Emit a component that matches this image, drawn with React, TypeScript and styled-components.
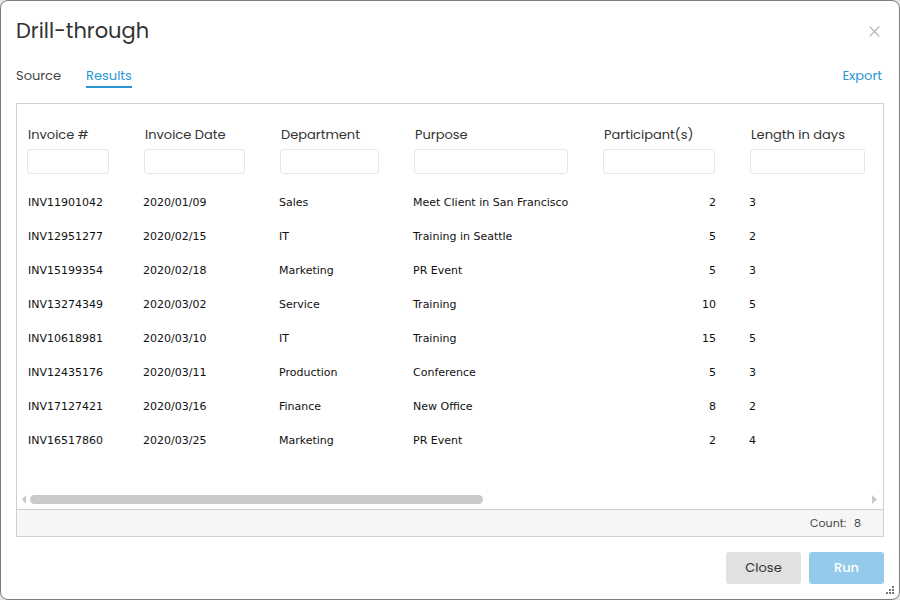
import React from "react";
import styled, { createGlobalStyle } from "styled-components";

const GlobalStyle = createGlobalStyle`
  *, *::before, *::after { box-sizing: border-box; }
  body {
    margin: 0;
    background: #e4e4e4;
    color: #333;
    font-family: Poppins, Inter, sans-serif;
    font-size: 13px;
  }
  button, input { font-family: inherit; font-size: inherit; }
`;

const Dialog = styled.section`
  position: relative;
  display: flex;
  flex-direction: column;
  min-height: 100vh;
  padding: 14px 15px 15px;
  border: 1px solid #7c7c7c;
  border-radius: 8px;
  background: #fff;
`;

const TitleBar = styled.header`
  display: flex;
  align-items: center;
  justify-content: space-between;
  height: 32px;
`;

const Title = styled.h1`
  margin: 0;
  font-size: 21px;
  line-height: 32px;
  font-weight: 400;
`;

const CloseIcon = styled.button`
  display: flex;
  padding: 4px;
  border: 0;
  background: none;
  color: #aaa;
  cursor: pointer;
`;

const TabBar = styled.nav`
  display: flex;
  justify-content: space-between;
  align-items: flex-start;
  height: 40px;
  margin: 16px 2px 0 0;
`;

const TabList = styled.div`
  display: flex;
  gap: 25px;
`;

const Tab = styled.button<{ $active?: boolean }>`
  height: 25px;
  padding: 2px 0 0;
  border: 0;
  border-bottom: 2px solid ${(p) => (p.$active ? "#2a97d3" : "transparent")};
  background: none;
  color: ${(p) => (p.$active ? "#2a97d3" : "#444")};
  line-height: 20px;
  cursor: pointer;
`;

const ExportLink = styled.a`
  color: #2a97d3;
  line-height: 25px;
  text-decoration: none;
`;

const Panel = styled.div`
  display: flex;
  flex: 1;
  flex-direction: column;
  border: 1px solid #d0d0d0;
`;

const TableArea = styled.div`
  flex: 1;
  padding-top: 20px;
`;

const Table = styled.table`
  width: 100%;
  table-layout: fixed;
  border-collapse: collapse;
`;

const Column = styled.col<{ $width: number }>`
  width: ${(p) => p.$width}px;
`;

const HeadCell = styled.th`
  padding: 0 25px 10px 10px;
  font-weight: 400;
  text-align: left;
  white-space: nowrap;

  &:last-child { padding-right: 18px; }
`;

const HeadLabel = styled.label`
  display: block;
  padding-left: 1px;
  line-height: 22px;
`;

const FilterInput = styled.input`
  display: block;
  width: 100%;
  height: 25px;
  margin-top: 3px;
  padding: 0 6px;
  border: 1px solid #e6e6e6;
  border-radius: 3px;
  background: #fff;
`;

const Cell = styled.td<{ $numeric?: boolean }>`
  height: 34px;
  padding: 2px 24px 0 9px;
  color: #111;
  font-family: Verdana, "DejaVu Sans", sans-serif;
  font-size: 11px;
  text-align: ${(p) => (p.$numeric ? "right" : "left")};
  white-space: nowrap;

  &:first-child { padding-left: 11px; }
`;

const ScrollRow = styled.div`
  display: flex;
  align-items: center;
  gap: 4px;
  height: 19px;
  padding: 0 6px 0 5px;
`;

const Arrow = styled.svg`
  flex: none;
  fill: #c9c9c9;
`;

const Track = styled.div`
  flex: 1;
  height: 9px;
`;

const Thumb = styled.div`
  width: 54%;
  height: 100%;
  border-radius: 5px;
  background: #cacaca;
`;

const Summary = styled.div`
  display: flex;
  justify-content: flex-end;
  gap: 8px;
  padding: 0 22px 0 0;
  border-top: 1px solid #d0d0d0;
  background: #f6f6f6;
  color: #444;
  font-size: 11px;
  line-height: 26px;
`;

const Actions = styled.footer`
  display: flex;
  justify-content: flex-end;
  gap: 8px;
  margin-top: 15px;
`;

const ActionButton = styled.button<{ $primary?: boolean }>`
  width: 75px;
  height: 32px;
  padding: 0;
  border: 0;
  border-radius: 3px;
  background: ${(p) => (p.$primary ? "#94caea" : "#e1e1e1")};
  color: ${(p) => (p.$primary ? "#fff" : "#333")};
  font-weight: ${(p) => (p.$primary ? 500 : 400)};
`;

const ResizeGrip = styled.svg`
  position: absolute;
  right: 5px;
  bottom: 5px;
  fill: #777;
`;

const columns = [
  { id: "invoice", label: "Invoice #", width: 117 },
  { id: "date", label: "Invoice Date", width: 136 },
  { id: "department", label: "Department", width: 134 },
  { id: "purpose", label: "Purpose", width: 189 },
  { id: "participants", label: "Participant(s)", width: 147, numeric: true },
  { id: "length", label: "Length in days", width: 143 },
];

const rows = [
  ["INV11901042", "2020/01/09", "Sales", "Meet Client in San Francisco", "2", "3"],
  ["INV12951277", "2020/02/15", "IT", "Training in Seattle", "5", "2"],
  ["INV15199354", "2020/02/18", "Marketing", "PR Event", "5", "3"],
  ["INV13274349", "2020/03/02", "Service", "Training", "10", "5"],
  ["INV10618981", "2020/03/10", "IT", "Training", "15", "5"],
  ["INV12435176", "2020/03/11", "Production", "Conference", "5", "3"],
  ["INV17127421", "2020/03/16", "Finance", "New Office", "8", "2"],
  ["INV16517860", "2020/03/25", "Marketing", "PR Event", "2", "4"],
];

const gripDots = [[6, 0], [3, 3], [6, 3], [0, 6], [3, 6], [6, 6]];

export default function App() {
  return (
    <>
      <GlobalStyle />
      <Dialog role="dialog" aria-labelledby="dialog-title">
        <TitleBar>
          <Title id="dialog-title">Drill-through</Title>
          <CloseIcon type="button" aria-label="Close dialog">
            <svg width="11" height="11" viewBox="0 0 11 11" aria-hidden="true">
              <path d="M.7.7l9.6 9.6M10.3.7L.7 10.3" fill="none" stroke="currentColor" strokeWidth="1.1" />
            </svg>
          </CloseIcon>
        </TitleBar>

        <TabBar>
          <TabList role="tablist">
            <Tab type="button" role="tab" aria-selected="false">Source</Tab>
            <Tab type="button" role="tab" aria-selected="true" $active>Results</Tab>
          </TabList>
          <ExportLink href="#export">Export</ExportLink>
        </TabBar>

        <Panel>
          <TableArea>
            <Table>
              <colgroup>
                {columns.map((c) => <Column key={c.id} $width={c.width} />)}
              </colgroup>
              <thead>
                <tr>
                  {columns.map((c) => (
                    <HeadCell key={c.id} scope="col">
                      <HeadLabel htmlFor={`filter-${c.id}`}>{c.label}</HeadLabel>
                      <FilterInput id={`filter-${c.id}`} type="text" />
                    </HeadCell>
                  ))}
                </tr>
              </thead>
              <tbody>
                {rows.map((row) => (
                  <tr key={row[0]}>
                    {row.map((value, i) => (
                      <Cell key={columns[i].id} $numeric={columns[i].numeric}>{value}</Cell>
                    ))}
                  </tr>
                ))}
              </tbody>
            </Table>
          </TableArea>
          <ScrollRow>
            <Arrow width="4" height="9" viewBox="0 0 4 9" aria-hidden="true">
              <path d="M4 0v9L0 4.5z" />
            </Arrow>
            <Track><Thumb /></Track>
            <Arrow width="5" height="9" viewBox="0 0 5 9" aria-hidden="true">
              <path d="M0 0v9l5-4.5z" />
            </Arrow>
          </ScrollRow>
          <Summary>
            <span>Count:</span>
            <span>8</span>
          </Summary>
        </Panel>

        <Actions>
          <ActionButton type="button">Close</ActionButton>
          <ActionButton type="button" $primary>Run</ActionButton>
        </Actions>

        <ResizeGrip width="8" height="8" viewBox="0 0 8 8" aria-hidden="true">
          {gripDots.map(([x, y]) => (
            <rect key={`${x}-${y}`} x={x} y={y} width="2" height="2" />
          ))}
        </ResizeGrip>
      </Dialog>
    </>
  );
}
